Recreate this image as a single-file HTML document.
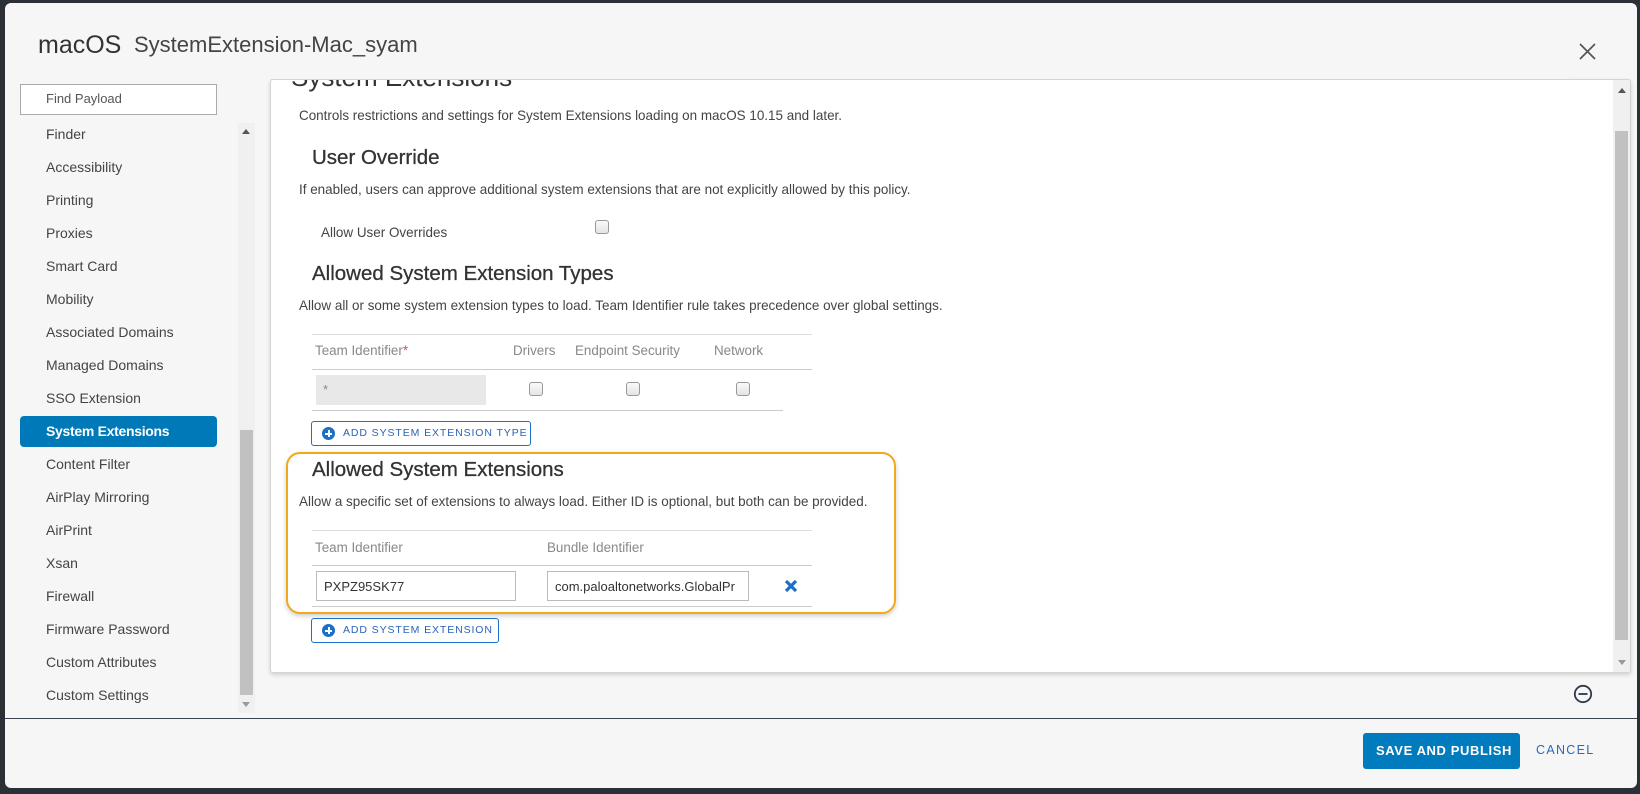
<!DOCTYPE html>
<html><head><style>
*{box-sizing:border-box;margin:0;padding:0}
body{width:1640px;height:794px;background:#2b3036;font-family:"Liberation Sans",sans-serif;position:relative;overflow:hidden;color:#333}
.abs{position:absolute}
#modal{left:5px;top:3px;width:1632px;height:785px;background:#f6f6f6;border-radius:6px}
.t{position:absolute;white-space:nowrap}
.side{font-size:14px;color:#444}
.sel{left:20px;top:416px;width:197px;height:31px;background:#0079b9;border-radius:4px}
#panel{left:270px;top:79px;width:1361px;height:594px;background:#fff;border:1px solid #d4d4d4;border-radius:3px;box-shadow:0 2px 4px rgba(0,0,0,.15);overflow:hidden}
.h{font-size:20.5px;color:#333;-webkit-text-stroke:.3px #333}
.d{font-size:13.45px;color:#444}
.th{font-size:13.4px;color:#888}
.line{position:absolute;height:1px;background:#ddd}
.cb{position:absolute;width:14px;height:14px;border:1px solid #999;border-radius:3px;background:linear-gradient(#fafafa,#e4e4e4)}
.btn{position:absolute;border:1px solid #1a72c9;border-radius:3px;background:#fff;font-size:10.5px;letter-spacing:.9px;color:#2a63b8}
.btn i{position:absolute;left:10px;top:5px;width:13px;height:13px;border-radius:50%;background:#1a6fc7}
.btn i:before{content:"";position:absolute;left:3px;top:5.5px;width:7px;height:2px;background:#fff}
.btn i:after{content:"";position:absolute;left:5.5px;top:3px;width:2px;height:7px;background:#fff}
.inp{position:absolute;border:1px solid #bbb;background:#fff;font-size:13px;color:#333;padding:7px 7px;height:30px;overflow:hidden;white-space:nowrap}
</style></head><body>
<div id="modal" class="abs"></div>
<div class="t" style="left:38px;top:31px;font-size:25px;color:#333">macOS</div>
<div class="t" style="left:134px;top:32px;font-size:22px;color:#444">SystemExtension-Mac_syam</div>
<svg class="abs" style="left:1579px;top:43px" width="17" height="17"><path d="M1 1L16 16M16 1L1 16" stroke="#555" stroke-width="1.7"/></svg>
<div class="abs" style="left:20px;top:84px;width:197px;height:31px;border:1px solid #aaa;background:#fff"></div>
<div class="t" style="left:46px;top:91px;font-size:13px;color:#555">Find Payload</div>
<div class="abs sel"></div>
<div class="t side" style="left:46px;top:126px">Finder</div>
<div class="t side" style="left:46px;top:159px">Accessibility</div>
<div class="t side" style="left:46px;top:192px">Printing</div>
<div class="t side" style="left:46px;top:225px">Proxies</div>
<div class="t side" style="left:46px;top:258px">Smart Card</div>
<div class="t side" style="left:46px;top:291px">Mobility</div>
<div class="t side" style="left:46px;top:324px">Associated Domains</div>
<div class="t side" style="left:46px;top:357px">Managed Domains</div>
<div class="t side" style="left:46px;top:390px">SSO Extension</div>
<div class="t side" style="left:46px;top:423px;color:#fff;font-weight:bold;letter-spacing:-.3px">System Extensions</div>
<div class="t side" style="left:46px;top:456px">Content Filter</div>
<div class="t side" style="left:46px;top:489px">AirPlay Mirroring</div>
<div class="t side" style="left:46px;top:522px">AirPrint</div>
<div class="t side" style="left:46px;top:555px">Xsan</div>
<div class="t side" style="left:46px;top:588px">Firewall</div>
<div class="t side" style="left:46px;top:621px">Firmware Password</div>
<div class="t side" style="left:46px;top:654px">Custom Attributes</div>
<div class="t side" style="left:46px;top:687px">Custom Settings</div>
<div class="abs" style="left:238px;top:123px;width:17px;height:590px;background:#f0f0f0"></div>
<div class="abs" style="left:240px;top:430px;width:13px;height:265px;background:#c1c1c1"></div>
<div class="abs" style="left:242px;top:129px;border:4px solid transparent;border-bottom:5px solid #555;border-top:0"></div>
<div class="abs" style="left:242px;top:702px;border:4px solid transparent;border-top:5px solid #999;border-bottom:0"></div>

<div id="panel" class="abs">
<div class="abs" style="right:0;top:0;width:17px;height:594px;background:#f0f0f0"></div>
<div class="abs" style="right:2px;top:51px;width:13px;height:509px;background:#c1c1c1"></div>
<div class="abs" style="right:4px;top:8px;border:4px solid transparent;border-bottom:5px solid #555;border-top:0"></div>
<div class="abs" style="right:4px;top:580px;border:4px solid transparent;border-top:5px solid #999;border-bottom:0"></div>
</div>
<div class="t" style="left:291px;top:62px;font-size:26px;color:#333">System Extensions</div>
<div class="abs" style="left:271px;top:62px;width:1300px;height:17px;background:#f6f6f6"></div>
<div class="abs" style="left:271px;top:79px;width:1300px;height:1px;background:#d4d4d4"></div>
<div class="t d" style="left:299px;top:108px">Controls restrictions and settings for System Extensions loading on macOS 10.15 and later.</div>
<div class="t h" style="left:312px;top:146px">User Override</div>
<div class="t d" style="left:299px;top:182px">If enabled, users can approve additional system extensions that are not explicitly allowed by this policy.</div>
<div class="t d" style="left:321px;top:225px">Allow User Overrides</div>
<div class="cb" style="left:595px;top:220px"></div>
<div class="t h" style="left:312px;top:262px">Allowed System Extension Types</div>
<div class="t d" style="left:299px;top:298px">Allow all or some system extension types to load. Team Identifier rule takes precedence over global settings.</div>
<div class="line" style="left:312px;top:334px;width:500px"></div>
<div class="t th" style="left:315px;top:343px">Team Identifier<span style="color:#d9534f">*</span></div>
<div class="t th" style="left:513px;top:343px">Drivers</div>
<div class="t th" style="left:575px;top:343px">Endpoint Security</div>
<div class="t th" style="left:714px;top:343px">Network</div>
<div class="line" style="left:312px;top:369px;width:500px;background:#ccc"></div>
<div class="abs" style="left:316px;top:375px;width:170px;height:30px;background:#e8e8e8"></div>
<div class="t" style="left:323px;top:382px;font-size:13px;color:#888">*</div>
<div class="cb" style="left:529px;top:382px"></div>
<div class="cb" style="left:626px;top:382px"></div>
<div class="cb" style="left:736px;top:382px"></div>
<div class="line" style="left:312px;top:410px;width:471px;background:#ccc"></div>
<div class="btn" style="left:311px;top:421px;width:220px;height:25px"><i></i><span class="t" style="left:31px;top:5px">ADD SYSTEM EXTENSION TYPE</span></div>

<div class="abs" style="left:286px;top:452px;width:610px;height:162px;border:2px solid #f1a81c;border-radius:14px;box-shadow:0 2px 5px rgba(0,0,0,.2)"></div>
<div class="t h" style="left:312px;top:458px">Allowed System Extensions</div>
<div class="t d" style="left:299px;top:494px">Allow a specific set of extensions to always load. Either ID is optional, but both can be provided.</div>
<div class="line" style="left:312px;top:530px;width:500px"></div>
<div class="t th" style="left:315px;top:540px">Team Identifier</div>
<div class="t th" style="left:547px;top:540px">Bundle Identifier</div>
<div class="line" style="left:312px;top:565px;width:500px;background:#ccc"></div>
<div class="inp" style="left:316px;top:571px;width:200px">PXPZ95SK77</div>
<div class="inp" style="left:547px;top:571px;width:202px">com.paloaltonetworks.GlobalPr</div>
<svg class="abs" style="left:784px;top:579px" width="14" height="14"><path d="M2 2L12 12M12 2L2 12" stroke="#1a6fc7" stroke-width="3.2"/></svg>
<div class="line" style="left:312px;top:606px;width:500px;background:#ccc"></div>
<div class="btn" style="left:311px;top:618px;width:188px;height:25px"><i></i><span class="t" style="left:31px;top:5px">ADD SYSTEM EXTENSION</span></div>

<svg class="abs" style="left:1573px;top:684px" width="20" height="20"><circle cx="10" cy="10" r="8.2" fill="none" stroke="#2d3a4a" stroke-width="1.8"/><path d="M5.5 10H14.5" stroke="#2d3a4a" stroke-width="1.8"/></svg>
<div class="abs" style="left:5px;top:718px;width:1632px;height:1px;background:#3a4250"></div>
<div class="abs" style="left:1363px;top:733px;width:157px;height:36px;background:#007bbd;border-radius:3px"></div>
<div class="t" style="left:1376px;top:743px;font-size:13px;font-weight:bold;color:#fff;letter-spacing:.6px">SAVE AND PUBLISH</div>
<div class="t" style="left:1536px;top:743px;font-size:12.5px;color:#2a6ab8;letter-spacing:1.3px">CANCEL</div>
</body></html>
